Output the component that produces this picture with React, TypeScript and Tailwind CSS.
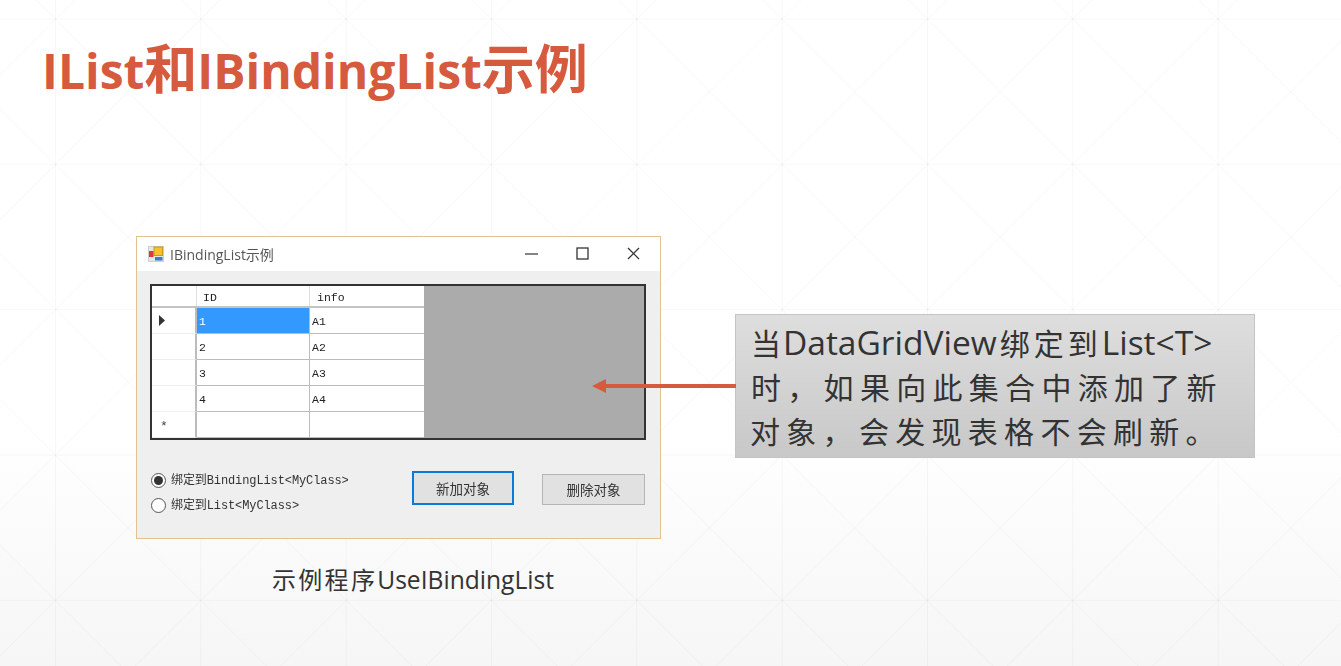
// background lattice: square tiles with both diagonals
function Lattice() {
  const step = 145.33
  const xs = Array.from({ length: 11 }, (_, i) => -90 + i * step + 0.2)
  const ys = Array.from({ length: 6 }, (_, i) => -126.3 + i * step)
  return (
    <svg className="absolute inset-0 h-[666px] w-[1341px]" viewBox="0 0 1341 666" fill="none" stroke="#000" strokeOpacity="0.03">
      {ys.map((y) => (
        <line key={y} x1="0" x2="1341" y1={y} y2={y} />
      ))}
      {xs.map((x) => (
        <line key={x} x1={x} x2={x} y1="0" y2="666" />
      ))}
      {ys.map((y) =>
        xs.map((x) => (
          <g key={`${x}-${y}`}>
            <line x1={x} y1={y} x2={x + step} y2={y + step} />
            <line x1={x + step} y1={y} x2={x} y2={y + step} />
          </g>
        )),
      )}
    </svg>
  )
}

function AppIcon() {
  return (
    <svg width="16" height="16" viewBox="0 0 16 16" className="shrink-0">
      <rect x="0.5" y="0.5" width="15" height="15" fill="#e6e6e6" stroke="#cfcfcf" />
      <rect x="6" y="1" width="8.5" height="8.5" fill="#f6c22e" stroke="#c9962a" />
      <rect x="1" y="5" width="4.5" height="6" fill="#d8393c" />
      <rect x="7" y="11" width="7.5" height="3.5" fill="#3f78cc" />
    </svg>
  )
}

function WindowButtons() {
  return (
    <div className="mb-[2px] flex items-center gap-[38px] pr-[20px]">
      <svg width="13" height="13" viewBox="0 0 13 13" stroke="#333">
        <line x1="0" y1="7" x2="13" y2="7" strokeWidth="1.2" />
      </svg>
      <svg width="13" height="13" viewBox="0 0 13 13" fill="none" stroke="#333">
        <rect x="1" y="1" width="11" height="11" strokeWidth="1.3" />
      </svg>
      <svg width="13" height="13" viewBox="0 0 13 13" stroke="#333" strokeWidth="1.2">
        <line x1="1" y1="1" x2="12" y2="12" />
        <line x1="12" y1="1" x2="1" y2="12" />
      </svg>
    </div>
  )
}

const rows = [
  { id: '1', info: 'A1' },
  { id: '2', info: 'A2' },
  { id: '3', info: 'A3' },
  { id: '4', info: 'A4' },
  { id: '', info: '' },
]

function Grid() {
  return (
    <div className="flex h-[156px] w-[496px] border-2 border-[#333] bg-[#ababab]">
      <div className="w-[272px] shrink-0 bg-white font-['Liberation_Mono',monospace] text-[11.5px] font-medium text-[#222]">
        <div className="flex h-[22px] border-b-2 border-[#c4c4c4]">
          <div className="w-[45px] border-r border-[#e0e0e0]" />
          <div className="w-[113px] border-r border-[#e0e0e0] pl-[6px] leading-[23px]">ID</div>
          <div className="w-[114px] pl-[7px] leading-[23px]">info</div>
        </div>
        {rows.map((r, i) => (
          <div key={i} className="flex h-[26px]">
            <div className="flex w-[45px] items-center border-r-2 border-b border-r-[#bcbcbc] border-b-[#eeeeee] pl-[7px] text-[#444]">
              {i === 0 && (
                <svg width="6" height="11" viewBox="0 0 6 11">
                  <path d="M0 0 L6 5.5 L0 11 Z" fill="#333" />
                </svg>
              )}
              {i === 4 && <span className="ml-[1px] mt-[3px] text-[13px] leading-none">*</span>}
            </div>
            <div
              className={`w-[113px] border-r border-b border-[#bcbcbc] pl-[2px] leading-[27px] ${
                i === 0 ? 'bg-[#3399ff] text-white' : ''
              }`}
            >
              {r.id}
            </div>
            <div className="w-[114px] border-b border-[#bcbcbc] pl-[2px] leading-[27px]">{r.info}</div>
          </div>
        ))}
      </div>
    </div>
  )
}

function Radio({ checked, label }: { checked?: boolean; label: string }) {
  return (
    <div className="flex h-[25px] items-center gap-[5px]">
      <span className="flex h-[15px] w-[15px] items-center justify-center rounded-full border border-[#555] bg-white">
        {checked && <span className="h-[9px] w-[9px] rounded-full bg-[#333]" />}
      </span>
      <span className="font-['Liberation_Mono','Noto_Sans_CJK_SC',monospace] text-[12px] tracking-[-0.1px] text-[#333]">
        {label}
      </span>
    </div>
  )
}

function Dialog() {
  return (
    <div className="flex h-[303px] w-[525px] flex-col border border-[#e3c08f] bg-[#efefef] blur-[0.4px]">
      <div className="flex h-[34px] items-center justify-between bg-white pl-[11px]">
        <div className="flex items-center gap-[6px]">
          <AppIcon />
          <span className="font-['Open_Sans','Noto_Sans_CJK_SC',sans-serif] text-[14px] text-[#555]">
            IBindingList示例
          </span>
        </div>
        <WindowButtons />
      </div>
      <div className="pl-[13px] pt-[13px]">
        <Grid />
      </div>
      <div className="flex items-start pl-[14px] pt-[28px]">
        <div className="flex w-[261px] flex-col">
          <Radio checked label="绑定到BindingList<MyClass>" />
          <Radio label="绑定到List<MyClass>" />
        </div>
        <button className="mt-[3px] h-[34px] w-[102px] border-2 border-[#0a7ad6] bg-[#e1e1e1] font-['Noto_Sans_CJK_SC',sans-serif] text-[13.5px] text-[#333]">
          新加对象
        </button>
        <button className="ml-[28px] mt-[6px] h-[31px] w-[103px] border border-[#b5b5b5] bg-[#e1e1e1] font-['Noto_Sans_CJK_SC',sans-serif] text-[13.5px] text-[#333]">
          删除对象
        </button>
      </div>
    </div>
  )
}

function Callout() {
  return (
    <div className="h-[144px] w-[520px] border border-[#c4c4c4] bg-gradient-to-b from-[#dedede] to-[#c8c8c8] pl-[15px] pt-[5px] font-['Open_Sans','Noto_Sans_CJK_SC',sans-serif] text-[30px] leading-[44px] text-[#333]">
      <div className="whitespace-nowrap">
        <span className="tracking-[2px]">当</span>
        <span className="text-[33.5px]">DataGridView</span>
        <span className="ml-[3px] tracking-[4px]">绑定到</span>
        <span className="text-[33.5px]">List&lt;T&gt;</span>
      </div>
      <div className="whitespace-nowrap tracking-[6.3px]">时，如果向此集合中添加了新</div>
      <div className="-ml-[1px] whitespace-nowrap tracking-[6.3px]">对象，会发现表格不会刷新。</div>
    </div>
  )
}

export default function App() {
  return (
    <div className="relative h-[666px] w-[1341px] overflow-hidden bg-gradient-to-b from-white from-[64%] to-[#f6f6f6]">
      <Lattice />
      <div className="relative flex h-full flex-col">
        <h1 className="whitespace-nowrap pl-[42px] pt-[33px] font-['Open_Sans','Noto_Sans_CJK_SC',sans-serif] text-[48px] font-bold leading-[72px] text-[#d65b3e]">
          IList<span className="text-[53px]">和</span>IBindingList
          <span className="text-[53px]">示例</span>
        </h1>
        <div className="relative flex items-start pl-[136px] pt-[129px]">
          <div className="flex flex-col">
            <Dialog />
            <p className="mt-[23px] whitespace-nowrap pl-[136px] font-['Open_Sans','Noto_Sans_CJK_SC',sans-serif] text-[24.6px] leading-[36px] text-[#333]">
              <span className="text-[24px] tracking-[2.3px]">示例程序</span>UseIBindingList
            </p>
          </div>
          <div className="ml-[74px] mt-[78px]">
            <Callout />
          </div>
          {/* arrow sits on top of the grid, comes out of the callout */}
          <svg className="absolute left-[592px] top-[271px]" width="145" height="16" viewBox="0 0 145 16">
            <line x1="12" y1="8" x2="144" y2="8" stroke="#d65b3e" strokeWidth="4" />
            <path d="M0 8 L14 1 L14 15 Z" fill="#d65b3e" />
          </svg>
        </div>
      </div>
    </div>
  )
}
